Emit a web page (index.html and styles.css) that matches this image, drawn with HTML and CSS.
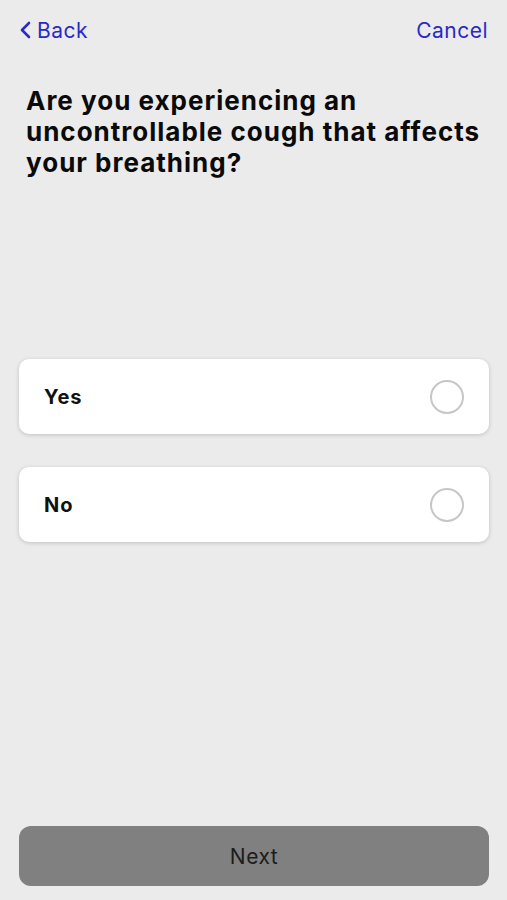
FILE: index.html
```html
<!DOCTYPE html>
<html lang="en">
<head>
<meta charset="utf-8">
<title>Question</title>
<link rel="stylesheet" href="styles.css">
</head>
<body>
<div class="screen">
  <header class="nav">
    <a class="nav-btn back">
      <svg class="chev" width="12" height="18" viewBox="0 0 12 18"><path d="M10 2 L3 9 L10 16" fill="none" stroke="currentColor" stroke-width="2.6" stroke-linecap="round" stroke-linejoin="round"/></svg>
      <span>Back</span>
    </a>
    <a class="nav-btn">Cancel</a>
  </header>
  <h1 class="question">Are you experiencing an uncontrollable cough that affects your breathing?</h1>
  <div class="options">
    <div class="option"><span class="label">Yes</span><span class="radio"></span></div>
    <div class="option"><span class="label">No</span><span class="radio"></span></div>
  </div>
  <div class="spacer"></div>
  <button class="next">Next</button>
</div>
</body>
</html>
```

FILE: styles.css
```css
html, body {
  margin: 0;
  padding: 0;
  background: #ebebeb;
}
body {
  font-family: Inter, "Liberation Sans", Arial, sans-serif;
}
.screen {
  height: 900px;
  box-sizing: border-box;
  display: flex;
  flex-direction: column;
  padding: 0 18px 14px 19px;
}
.nav {
  display: flex;
  justify-content: space-between;
  align-items: center;
  height: 30px;
  margin-top: 15px;
  padding-right: 1px;
}
.nav-btn {
  color: #2a2ac4;
  font-size: 21px;
  letter-spacing: 0.5px;
  display: flex;
  align-items: center;
}
.back .chev {
  margin-right: 6px;
}
.question {
  margin: 40px 0 0 7px;
  font-size: 26px;
  line-height: 31px;
  font-weight: 700;
  color: #0a0a0a;
  letter-spacing: 1px;
}
.options {
  display: flex;
  flex-direction: column;
  gap: 33px;
  margin-top: 181px;
}
.option {
  height: 75px;
  background: #fff;
  border-radius: 10px;
  box-shadow: 0 1px 4px rgba(0,0,0,0.18);
  display: flex;
  align-items: center;
  justify-content: space-between;
  padding: 0 25px 0 25px;
}
.label {
  font-size: 20px;
  font-weight: 700;
  color: #111;
  letter-spacing: 1px;
}
.radio {
  width: 30px;
  height: 30px;
  border: 2px solid #c6c6c6;
  border-radius: 50%;
}
.spacer {
  flex: 1;
}
.next {
  height: 60px;
  background: #808080;
  border: none;
  border-radius: 12px;
  font-family: inherit;
  font-size: 21px;
  letter-spacing: 0.5px;
  color: #1c1c1c;
  width: 100%;
}
```
